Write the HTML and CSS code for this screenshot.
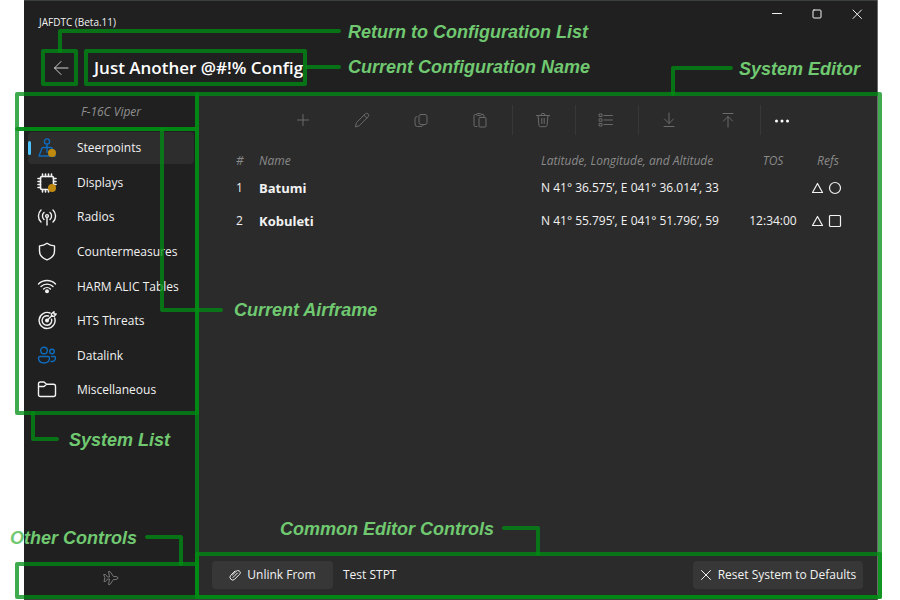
FILE: index.html
```html
<!DOCTYPE html>
<html lang="en">
<head>
<meta charset="utf-8">
<title>JAFDTC (Beta.11)</title>
<link rel="stylesheet" href="styles.css">
</head>
<body>
<div class="window">
  <header class="titlebar">
    <span class="app-name">JAFDTC (Beta.11)</span>
    <div class="caption-buttons">
      <button type="button" aria-label="Minimize"><svg class="cap" viewBox="0 0 12 12"><path d="M1.500 5.500h9"/></svg></button>
      <button type="button" aria-label="Maximize"><svg class="cap" viewBox="0 0 12 12"><rect x="2" y="2" width="8" height="8" rx="1"/></svg></button>
      <button type="button" aria-label="Close"><svg class="cap" viewBox="0 0 12 12"><path d="M2 2l8.500 8.500M10.500 2L2 10.500"/></svg></button>
    </div>
  </header>
  <div class="heading">
    <button type="button" class="back" aria-label="Back"><svg class="i16" viewBox="0 0 16 16"><path d="M15 8H1.500M8 1.500L1.500 8L8 14.500"/></svg></button>
    <h1>Just Another @#!% Config</h1>
  </div>
  <div class="body">
    <aside class="sidebar">
      <p class="airframe">F-16C Viper</p>
      <nav>
        <ul class="systems">
          <li><a href="#steerpoints" class="selected" aria-current="page">
            <svg class="i20 blue" viewBox="0 0 20 20"><circle cx="10" cy="3.500" r="2.600"/><path d="M10 6.200v8M6.500 9.500h7M6 9.800H5.200L2 18h16L14.800 9.800H14"/><circle class="dot" cx="15" cy="15" r="4"/></svg>
            <span>Steerpoints</span></a></li>
          <li><a href="#displays">
            <svg class="i20 bold" viewBox="0 0 20 20"><rect x="3.500" y="3.500" width="13" height="13" rx="1.500"/><path d="M5.500 3.500v-2.500M8.500 3.500v-2.500M11.500 3.500v-2.500M14.500 3.500v-2.500M5.500 16.500v2.500M8.500 16.500v2.500M11.500 16.500v2.500M3.500 5.500H1M3.500 8.500H1M3.500 11.500H1M3.500 14.500H1M16.500 5.500H19M16.500 8.500H19M16.500 11.500H19"/><circle class="dot" cx="15" cy="15" r="4"/></svg>
            <span>Displays</span></a></li>
          <li><a href="#radios">
            <svg class="i20" viewBox="0 0 20 20"><circle cx="10" cy="9" r="1.400"/><path d="M10 10.500v7.500M7 12.500a4.700 4.700 0 0 1 0-7M13 12.500a4.700 4.700 0 0 0 0-7M4 15a8.300 8.300 0 0 1 0-12M16 15a8.300 8.300 0 0 0 0-12"/></svg>
            <span>Radios</span></a></li>
          <li><a href="#countermeasures">
            <svg class="i20" viewBox="0 0 20 20"><path d="M10 1.300C12.200 2.900 14.700 3.700 17.500 3.900V9C17.500 13.500 14.800 16.200 10 17.900C5.200 16.200 2.500 13.500 2.500 9V3.900C5.300 3.700 7.800 2.900 10 1.300Z"/></svg>
            <span>Countermeasures</span></a></li>
          <li><a href="#harm">
            <svg class="i20" viewBox="0 0 20 20"><path d="M1.500 7a12 12 0 0 1 17 0M4 9.600a8.500 8.500 0 0 1 12 0M6.600 12a4.900 4.900 0 0 1 6.800 0"/><circle class="solid" cx="10" cy="14.200" r="1.300"/></svg>
            <span>HARM ALIC Tables</span></a></li>
          <li><a href="#hts">
            <svg class="i20" viewBox="0 0 20 20"><path d="M13 2A8 8 0 1 0 17.700 7M11.500 5A4.800 4.800 0 1 0 14.500 8.200M10 9.500l5-5M14.500 5V2.800L17 .8v2.200h2.200l-2 2.400z"/><circle class="solid" cx="10" cy="9.500" r="1.300"/></svg>
            <span>HTS Threats</span></a></li>
          <li><a href="#datalink">
            <svg class="i20 blue" viewBox="0 0 20 20"><circle cx="7" cy="4.500" r="3.300"/><circle cx="15" cy="5.500" r="2.300"/><path d="M3 10.500h8q1.500 0 1.500 1.500c0 3-2 5-5.500 5s-5.500-2-5.500-5Q1.500 10.500 3 10.500zM14.500 10.500h3q1 0 1 1.300c0 2.500-1.700 4-4.500 3.700"/></svg>
            <span>Datalink</span></a></li>
          <li><a href="#misc">
            <svg class="i20" viewBox="0 0 20 20"><path d="M1.500 14.500V4Q1.500 2 3.500 2H7L9.500 4.300H16.500Q18.500 4.300 18.500 6.300V14.500Q18.500 16.500 16.500 16.500H3.500Q1.500 16.500 1.500 14.500zM1.500 6.500H7l2.500-2.200"/></svg>
            <span>Miscellaneous</span></a></li>
        </ul>
      </nav>
      <div class="sidebar-foot">
        <button type="button" aria-label="Load to jet" disabled><svg class="i16" viewBox="0 0 16 16"><path d="M1 4.500h1.500L4.500 7H6.500L5.500 1.500H7L10.500 6.500H13Q15 6.800 15 8T13 9.500H10.500L7 14.500H5.500L6.500 9H4.500L2.500 11.500H1L1.800 8z"/></svg></button>
      </div>
    </aside>
    <main class="editor">
      <div class="toolbar" role="toolbar" aria-label="Steerpoint commands">
        <button type="button" aria-label="Add" disabled><svg class="i16" viewBox="0 0 16 16"><path d="M8 2.500v11M2.500 8h11"/></svg></button>
        <button type="button" aria-label="Edit" disabled><svg class="i16" viewBox="0 0 16 16"><path d="M1.500 14.500l1-4L11.300 1.900a1.900 1.900 0 0 1 2.800 2.800L5.500 13.500zM10 3.200l2.800 2.800"/></svg></button>
        <button type="button" aria-label="Copy" disabled><svg class="i16" viewBox="0 0 16 16"><rect x="6" y="2.500" width="8" height="10" rx="2"/><path d="M4 4.500Q2 4.500 2 6.500V12Q2 14.500 4.500 14.500H8Q9.500 14.500 10 13.500"/></svg></button>
        <button type="button" aria-label="Paste" disabled><svg class="i16" viewBox="0 0 16 16"><path d="M5 14.500H3.200Q2 14.500 2 13.200V3.700Q2 2.500 3.200 2.500H4.500M9.500 2.500H11Q12 2.500 12 3.700V4.500"/><rect x="4.500" y="1.500" width="5" height="2" rx="1"/><rect x="7" y="5.500" width="7" height="9.500" rx="1"/></svg></button>
        <span class="sep"></span>
        <button type="button" aria-label="Delete" disabled><svg class="i16" viewBox="0 0 16 16"><path d="M1.500 3.500h13M6 3.300a2 2 0 0 1 4 0M3 3.500l1 10Q4.200 14.700 5.500 14.700h5Q11.800 14.700 12 13.500l1-10M6.800 6.500v5M9.200 6.500v5"/></svg></button>
        <span class="sep"></span>
        <button type="button" aria-label="Renumber" disabled><svg class="i16" viewBox="0 0 16 16"><path d="M6 3.500h8.500M6 8h8.500M6 12.500h8.500"/><path d="M1.500 2h2.500v2.500H1.500zM1.500 6.800h2.500v2.500H1.500zM1.500 11.500h2.500V14H1.500z"/></svg></button>
        <span class="sep"></span>
        <button type="button" aria-label="Import" disabled><svg class="i16" viewBox="0 0 16 16"><path d="M8 1v10.500M3.500 7L8 11.500L12.500 7M3 14.500h10"/></svg></button>
        <button type="button" aria-label="Export" disabled><svg class="i16" viewBox="0 0 16 16"><path d="M8 15V4.500M3.500 9L8 4.500L12.500 9M3 1.500h10"/></svg></button>
        <span class="sep"></span>
        <button type="button" class="more" aria-label="More"><svg class="i16" viewBox="0 0 16 16"><circle cx="2.500" cy="9" r="1.500"/><circle cx="8" cy="9" r="1.500"/><circle cx="13.500" cy="9" r="1.500"/></svg></button>
      </div>
      <table class="points">
        <thead>
          <tr><th class="num">#</th><th class="name">Name</th><th class="pos">Latitude, Longitude, and Altitude</th><th class="tos">TOS</th><th class="refs">Refs</th></tr>
        </thead>
        <tbody>
          <tr><td class="num">1</td><td class="name">Batumi</td><td class="pos">N 41° 36.575’, E 041° 36.014’, 33</td><td class="tos"></td>
            <td class="refs"><svg class="marks" viewBox="0 0 32 14"><path d="M6.500 2.500L11.500 11.500H1.500z"/><circle cx="24" cy="7" r="5.500"/></svg></td></tr>
          <tr><td class="num">2</td><td class="name">Kobuleti</td><td class="pos">N 41° 55.795’, E 041° 51.796’, 59</td><td class="tos">12:34:00</td>
            <td class="refs"><svg class="marks" viewBox="0 0 32 14"><path d="M6.500 2.500L11.500 11.500H1.500z"/><rect x="18.500" y="1.500" width="11" height="11" rx="1"/></svg></td></tr>
        </tbody>
      </table>
      <footer class="editor-foot">
        <button type="button" class="action unlink"><svg class="i12" viewBox="0 0 12 12"><path d="M4 8.500L8.500 4M6 2L1.800 6.300a2.700 2.700 0 0 0 3.900 3.900L10.300 5.500a2 2 0 0 0 0-3.500a2.500 2.500 0 0 0-3.300.500L3.500 6"/></svg>Unlink From</button>
        <span class="linked">Test STPT</span>
        <button type="button" class="action reset"><svg class="i12" viewBox="0 0 12 12"><path d="M1.500 1.500l9 9M10.500 1.500l-9 9"/></svg>Reset System to Defaults</button>
      </footer>
    </main>
  </div>
</div>

<div class="notes">
  <svg class="callouts" viewBox="0 0 900 600">
    <rect x="43" y="51" width="33" height="33"/>
    <rect x="86" y="51" width="219" height="33"/>
    <rect x="17" y="94" width="180" height="35"/>
    <rect x="17" y="129" width="180" height="284"/>
    <rect x="197" y="94" width="683" height="503"/>
    <rect x="197" y="554" width="683" height="43"/>
    <rect x="17" y="564" width="180" height="33"/>
    <path d="M60 51V31H339M307 67H339M731 68H673V94M162 129V310H221M33 413V439H57M147 537H181V564M504 528H538V554"/>
  </svg>
  <span class="note return">Return to Configuration List</span>
  <span class="note config">Current Configuration Name</span>
  <span class="note sys-editor">System Editor</span>
  <span class="note frame">Current Airframe</span>
  <span class="note sys-list">System List</span>
  <span class="note other">Other Controls</span>
  <span class="note common">Common Editor Controls</span>
</div>
</body>
</html>
```
FILE: styles.css
```css
* { box-sizing: border-box; }

body {
  margin: 0;
  background: #fff;
  color: #f2f2f2;
  font: 12px/16px "Open Sans", "Noto Sans", sans-serif;
}

h1, p, ul { margin: 0; padding: 0; }

button {
  margin: 0;
  padding: 0;
  border: 0;
  background: none;
  color: inherit;
  font: inherit;
  display: flex;
  align-items: center;
  justify-content: center;
}

svg {
  fill: none;
  stroke: currentColor;
  stroke-linecap: round;
  stroke-linejoin: round;
  flex: none;
}

.i12 { width: 12px; height: 12px; }
.i16 { width: 16px; height: 16px; }
.i20 { width: 20px; height: 20px; stroke-width: 1.4; }
.bold { stroke-width: 1.6; }
.blue { color: #0f6cbd; }
.dot { fill: #c08a10; stroke: none; }
.solid { fill: currentColor; }

.window {
  display: flex;
  flex-direction: column;
  height: 100vh;
  margin: 0 23px 0 24px;
  background: #202020;
  border: solid #3c403c;
  border-width: 1px 0;
  box-shadow: 1px 0 #6a6a6a;
}

.titlebar {
  display: flex;
  justify-content: space-between;
  height: 41px;
  padding-left: 15px;
}

.app-name { padding-top: 13px; font-size: 10px; }

.caption-buttons { display: flex; height: 26px; }
.caption-buttons button { width: 40px; }
.cap { width: 12px; height: 12px; }

.heading {
  display: flex;
  align-items: center;
  height: 51px;
  padding: 0 20px 0 21px;
}

.back { width: 32px; height: 32px; color: #d0d0d0; }

h1 {
  margin-left: 17px;
  font-size: 17px;
  line-height: 24px;
  font-weight: 600;
  color: #fff;
}

.body { display: flex; flex: 1; min-height: 0; }

.sidebar { display: flex; flex-direction: column; width: 174px; }

.airframe {
  height: 39px;
  padding-top: 11px;
  text-align: center;
  font-style: italic;
  color: #8f8f8f;
}

.systems {
  display: grid;
  grid-auto-rows: 1fr;
  height: 277px;
  padding: 0 4px;
  list-style: none;
}

.systems a {
  position: relative;
  display: flex;
  align-items: center;
  gap: 20px;
  height: 32px;
  padding-left: 9px;
  border-radius: 4px;
  color: inherit;
  text-decoration: none;
}

.systems .selected { background: #2d2d2d; }

.systems .selected::before {
  content: "";
  position: absolute;
  left: 0;
  top: 9px;
  width: 3px;
  height: 14px;
  border-radius: 2px;
  background: #4cc2ff;
}

.sidebar-foot {
  display: flex;
  justify-content: center;
  margin-top: auto;
  padding-bottom: 13px;
  color: #777;
}

.editor {
  display: flex;
  flex-direction: column;
  flex: 1;
  background: #2b2b2b;
}

.toolbar {
  display: flex;
  justify-content: center;
  align-items: center;
  height: 54px;
  margin-bottom: 3px;
}

.toolbar button { width: 59px; height: 30px; color: #6a6a6a; }
.toolbar .more { width: 40px; color: #fff; }
.more svg { fill: currentColor; stroke: none; }
.sep { width: 1px; height: 30px; margin: 0 1px 0 2px; background: #373737; }

.points {
  width: 100%;
  border-collapse: collapse;
  table-layout: fixed;
}

.points th, .points td { padding: 0; text-align: left; }
.points th { height: 22px; font-weight: 400; font-style: italic; color: #8a8a8a; }
.points td { height: 35px; }
.points .num { width: 61px; padding-left: 38px; }
.points .pos { width: 196px; }
.points .tos { width: 72px; text-align: center; }
.points .refs { width: 68px; padding-right: 30px; text-align: center; }
.points td.name { font-size: 13px; font-weight: 700; }
.points tbody tr:first-child td { height: 31px; }
.marks { display: block; width: 32px; height: 14px; margin-left: 2px; stroke-width: 1.2; }

.editor-foot {
  display: flex;
  align-items: center;
  margin-top: auto;
  padding: 0 14px 10px 14px;
}

.action {
  gap: 6px;
  height: 28px;
  border-radius: 4px;
  background: #373737;
}

.unlink { width: 121px; }
.reset { width: 170px; margin-left: auto; }
.linked { margin-left: 10px; }

/* Explanatory callouts drawn over the window */
.notes { position: absolute; left: 0; top: 0; pointer-events: none; }

.callouts {
  display: block;
  width: 900px;
  height: 600px;
  stroke: none;
}

.callouts rect, .callouts path { stroke: rgba(0, 142, 20, 0.75); stroke-width: 4px; }

.note {
  position: absolute;
  font: italic bold 18px/20px "Liberation Sans", Arial, sans-serif;
  color: #70c970;
  white-space: nowrap;
}

.return { left: 348px; top: 22px; }
.config { left: 348px; top: 57px; }
.sys-editor { left: 739px; top: 59px; }
.frame { left: 234px; top: 300px; }
.sys-list { left: 69px; top: 430px; }
.other { left: 10px; top: 528px; }
.common { left: 280px; top: 519px; }
```
